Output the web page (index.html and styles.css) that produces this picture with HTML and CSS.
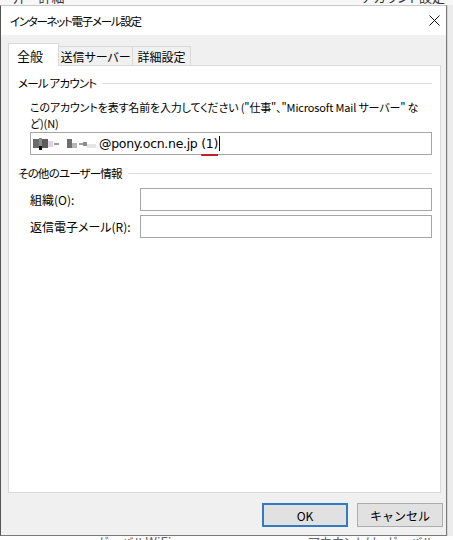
FILE: index.html
```html
<!DOCTYPE html>
<html lang="ja">
<head>
    <meta charset="UTF-8">
    <title>インターネット電子メール設定</title>
    <link rel="stylesheet" href="styles.css">
</head>
<body>
    <div class="screen">
        <div class="behind behind-top">
            <span>ー井ー詳細</span>
            <span>アカウント設定</span>
        </div>

        <div class="middle">
            <div class="dialog">
                <div class="titlebar">
                    <span class="title">インターネット電子メール設定</span>
                    <svg class="close" width="11" height="11" viewBox="0 0 11 11">
                        <path d="M0.5 0.5 L10.5 10.5 M10.5 0.5 L0.5 10.5" stroke="#111" stroke-width="1" fill="none"/>
                    </svg>
                </div>

                <div class="dialog-body">
                    <div class="tabs">
                        <div class="tab tab-general active">全般</div>
                        <div class="tab tab-send">送信サーバー</div>
                        <div class="tab tab-detail">詳細設定</div>
                    </div>

                    <div class="panel">
                        <!-- メール アカウント -->
                        <div class="group-title"><span>メール アカウント</span></div>
                        <div class="desc">このアカウントを表す名前を入力してください ("仕事"、"Microsoft Mail サーバー" な<br>ど)(N)</div>
                        <div class="field field-account">
                            <span class="mosaic">
                                <i class="m1"></i><i class="m2"></i><i class="m3"></i><i class="m4"></i><i class="m5"></i>
                                <i class="gap"></i>
                                <i class="m6"></i><i class="m7"></i><i class="m8"></i><i class="m9"></i><i class="m10"></i>
                            </span><span class="addr">@pony.ocn.ne.jp <span class="ime">(1)</span></span><span class="caret"></span>
                        </div>

                        <!-- その他のユーザー情報 -->
                        <div class="group-title second"><span>その他のユーザー情報</span></div>
                        <div class="row">
                            <label>組織(O):</label>
                            <div class="field"></div>
                        </div>
                        <div class="row">
                            <label>返信電子メール(R):</label>
                            <div class="field"></div>
                        </div>
                    </div>

                    <div class="buttons">
                        <button class="btn default">OK</button>
                        <button class="btn">キャンセル</button>
                    </div>
                </div>
            </div>
            <div class="behind-side"></div>
        </div>

        <div class="behind behind-bottom">
            <span class="left-text">ガーバルWiFiの</span>
            <span class="right-text">アカウントは: ガーバルWiFi</span>
        </div>
    </div>
</body>
</html>
```

FILE: styles.css
```css
body {
    margin: 0;
    font-family: "Noto Sans CJK JP", "Noto Sans", sans-serif;
    font-size: 12px;
    font-feature-settings: "palt";
    color: #000;
}
.screen {
    width: 453px;
    height: 540px;
    overflow: hidden;
    background: #f7f7f7;
    display: flex;
    flex-direction: column;
}

/* window behind the dialog */
.behind {
    display: flex;
    justify-content: space-between;
    overflow: hidden;
    color: #333;
    font-size: 13px;
    line-height: 16px;
}
.behind-top {
    height: 5px;
    padding: 0 8px 0 0;
}
.behind-top span {
    margin-top: -11px;
}
.behind-bottom {
    height: 4px;
    justify-content: flex-start;
    background: #fdfdfd;
}
.behind-bottom span {
    margin-top: -2px;
    color: #666;
}
.behind-bottom .left-text {
    margin-left: 96px;
}
.behind-bottom .right-text {
    margin-left: 128px;
}
.middle {
    display: flex;
    height: 531px;
}
.behind-side {
    flex: 1;
    background: #ececec;
    border-left: 1px solid #d6d6d6;
}

/* dialog */
.dialog {
    width: 447px;
    height: 531px;
    box-sizing: border-box;
    border: 1px solid #7a7a7a;
    border-left-color: #555;
    border-top-color: #c8c8c8;
    display: flex;
    flex-direction: column;
    background: #f0f0f0;
}
.titlebar {
    height: 29px;
    background: #fff;
    display: flex;
    align-items: center;
    justify-content: space-between;
    padding: 0 6px 0 9px;
}
.title {
    font-size: 11.5px;
    letter-spacing: -1.3px;
    margin-top: 1px;
}
.close {
    display: block;
    margin-top: -1px;
}
.dialog-body {
    flex: 1;
    display: flex;
    flex-direction: column;
    padding: 8px 5px 0 7px;
}

/* tabs */
.tabs {
    display: flex;
    align-items: flex-end;
    height: 22px;
}
.tab {
    box-sizing: border-box;
    height: 19px;
    border: 1px solid #d9d9d9;
    border-bottom: none;
    background: #f0f0f0;
    display: flex;
    align-items: center;
    justify-content: center;
    font-size: 12px;
}
.tab + .tab {
    border-left: none;
}
.tab.active {
    height: 23px;
    margin-bottom: -1px;
    background: #fff;
    position: relative;
    z-index: 1;
    font-size: 13px;
}
.tab-general {
    width: 51px;
    justify-content: flex-start;
    padding-left: 8px;
}
.tab-send {
    width: 74px;
}
.tab-detail {
    width: 58px;
}

/* panel */
.panel {
    box-sizing: border-box;
    width: 433px;
    height: 428px;
    background: #fff;
    border: 1px solid #d9d9d9;
    padding: 9px 8px 0 9px;
}
.group-title {
    display: flex;
    align-items: center;
    line-height: 16px;
    font-size: 11.5px;
    letter-spacing: -0.8px;
}
.group-title::after {
    content: "";
    flex: 1;
    height: 1px;
    background: #dcdcdc;
    margin-left: 6px;
}
.group-title.second {
    margin-top: 10px;
}
.desc {
    margin: 8px 0 0 12px;
    font-size: 11px;
    line-height: 16px;
    letter-spacing: -0.15px;
    white-space: nowrap;
}
.field {
    box-sizing: border-box;
    height: 23px;
    border: 1px solid #a6a6a6;
    background: #fff;
    flex: 1;
}
.field-account {
    margin: 1px 0 0 12px;
    display: flex;
    align-items: center;
    padding-left: 2px;
    white-space: pre;
}
.addr {
    font-family: "DejaVu Sans", sans-serif;
    font-size: 12.5px;
    letter-spacing: -0.3px;
}
.ime {
    text-decoration: underline;
    text-decoration-color: #c4202c;
    text-decoration-thickness: 2px;
    text-underline-offset: 6px;
}
.caret {
    width: 1px;
    height: 15px;
    background: #000;
    margin-left: 1px;
}

/* blurred name */
.mosaic {
    display: flex;
    align-items: center;
    height: 12px;
    margin-right: 3px;
}
.mosaic i {
    display: block;
    height: 9px;
}
.mosaic .m1 { width: 6px; background: #6a6a6a; }
.mosaic .m2 { width: 3px; height: 12px; background: linear-gradient(#8a8a8a 70%, #111 70%); }
.mosaic .m3 { width: 6px; background: #5c5c5c; }
.mosaic .m4 { width: 5px; height: 6px; background: #dcd4e4; }
.mosaic .m5 { width: 5px; height: 2px; background: #9a9a9a; margin-left: 1px; }
.mosaic .gap { width: 8px; height: 1px; }
.mosaic .m6 { width: 5px; background: #6e6e6e; }
.mosaic .m7 { width: 5px; height: 5px; background: #b8b8b8; margin-top: 4px; }
.mosaic .m8 { width: 4px; height: 2px; background: #a0a0a0; margin-left: 2px; }
.mosaic .m9 { width: 4px; height: 4px; background: #8c8c8c; }
.mosaic .m10 { width: 9px; height: 4px; background: #e4e4e4; margin-top: 4px; }

.row {
    display: flex;
    align-items: center;
    margin-left: 12px;
    margin-top: 4px;
}
.group-title.second + .row {
    margin-top: 7px;
}
.row label {
    width: 110px;
}

/* buttons */
.buttons {
    display: flex;
    justify-content: flex-end;
    gap: 9px;
    margin: 10px -2px 0 0;
}
.btn {
    box-sizing: border-box;
    width: 86px;
    height: 24px;
    border: 1px solid #adadad;
    background: #e1e1e1;
    font-family: inherit;
    font-size: 12px;
    padding: 0;
    color: #000;
}
.btn.default {
    border: 2px solid #2f7cc2;
}
```
